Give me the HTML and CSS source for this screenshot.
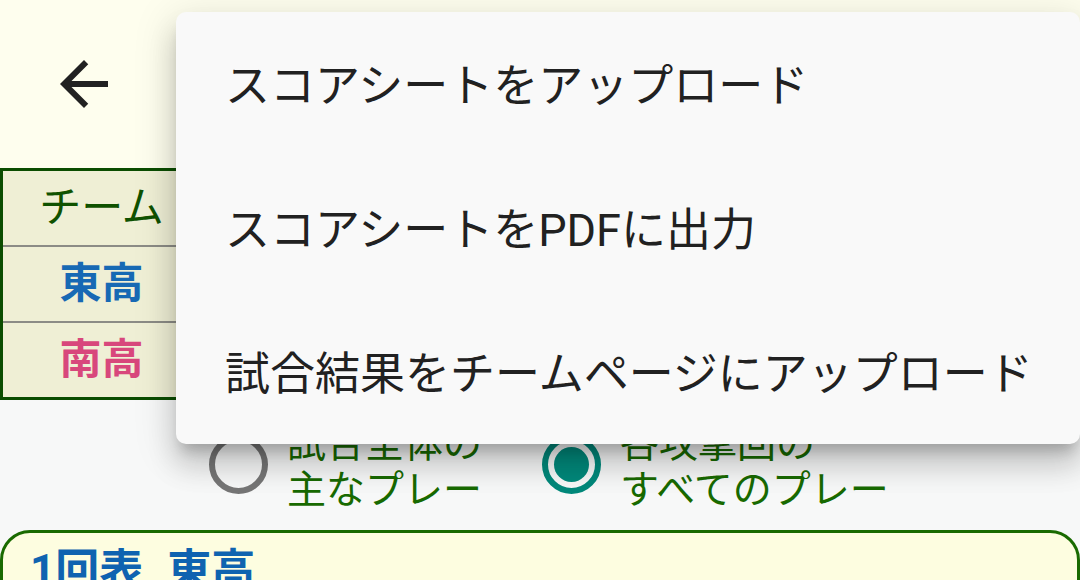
FILE: index.html
```html
<!DOCTYPE html>
<html lang="ja">
<head>
<meta charset="utf-8">
<link rel="stylesheet" href="styles.css">
</head>
<body>
<div class="page">
  <header class="appbar">
    <svg class="back" viewBox="0 0 24 24" width="72" height="72"><path d="M20 11H7.83l5.59-5.59L12 4l-8 8 8 8 1.41-1.41L7.83 13H20v-2z" fill="#212121"/></svg>
  </header>
  <div class="table">
    <div class="row head">チーム</div>
    <div class="divider"></div>
    <div class="row east">東高</div>
    <div class="divider"></div>
    <div class="row south">南高</div>
  </div>
  <div class="options">
    <div class="opt">
      <span class="radio"></span>
      <span class="label">試合全体の<br>主なプレー</span>
    </div>
    <div class="opt">
      <span class="radio on"></span>
      <span class="label">各攻撃回の<br>すべてのプレー</span>
    </div>
  </div>
  <div class="card">
    <div class="card-title">1回表<span class="team">東高</span></div>
  </div>
  <div class="menu">
    <div class="item">スコアシートをアップロード</div>
    <div class="item">スコアシートをPDFに出力</div>
    <div class="item">試合結果をチームページにアップロード</div>
  </div>
</div>
</body>
</html>
```
FILE: styles.css
```css
html, body {
  margin: 0;
  padding: 0;
}
body {
  width: 1080px;
  height: 580px;
  overflow: hidden;
  background: #f7f8f8;
  font-family: Roboto, "Noto Sans CJK JP", sans-serif;
}
.page {
  position: relative;
  width: 1080px;
  height: 580px;
  overflow: hidden;
}
.appbar {
  height: 168px;
  background: #fefeee;
  display: flex;
  align-items: center;
  padding-left: 48px;
}
.back {
  display: block;
}
.table {
  width: 260px;
  border: 3px solid #0b4d00;
  border-right: none;
  background: #efefd5;
  box-sizing: border-box;
}
.row {
  height: 74px;
  display: flex;
  align-items: center;
  justify-content: center;
  width: 197px;
  font-size: 42px;
  line-height: 1;
}
.divider {
  height: 2px;
  background: #8c8c86;
}
.head {
  color: #0f5200;
}
.east {
  color: #1769b4;
  font-weight: 700;
}
.south {
  color: #d8477c;
  font-weight: 700;
}
.options {
  height: 129px;
  display: flex;
  align-items: center;
  padding-left: 209px;
  padding-top: 4px;
  box-sizing: border-box;
  background: #f7f8f8;
}
.opt {
  display: flex;
  align-items: center;
  margin-right: 60px;
}
.radio {
  width: 59px;
  height: 59px;
  box-sizing: border-box;
  border: 6px solid #767676;
  border-radius: 50%;
  margin-right: 19px;
  margin-top: -4px;
  position: relative;
}
.radio.on {
  border-color: #00897b;
}
.radio.on::after {
  content: "";
  position: absolute;
  left: 6px;
  top: 6px;
  width: 35px;
  height: 35px;
  border-radius: 50%;
  background: #00897b;
}
.label {
  font-size: 39px;
  line-height: 46px;
  color: #186a00;
}
.card {
  margin-top: 1px;
  height: 120px;
  background: #fdfde0;
  border: 3px solid #196a00;
  border-radius: 30px;
  padding: 12px 27px 0;
}
.card-title {
  font-size: 44px;
  line-height: 1.2;
  font-weight: 700;
  color: #0f63b0;
}
.team {
  margin-left: 24px;
}
.menu {
  position: absolute;
  left: 176px;
  top: 12px;
  width: 904px;
  height: 432px;
  background: #f9f9f9;
  border-radius: 10px;
  box-shadow: 0 22px 28px 2px rgba(0,0,0,0.14), 0 8px 40px 6px rgba(0,0,0,0.10), 0 12px 14px -6px rgba(0,0,0,0.2);
}
.item {
  height: 144px;
  box-sizing: border-box;
  padding-bottom: 3px;
  display: flex;
  align-items: center;
  padding-left: 49px;
  font-size: 45px;
  color: #212121;
}
```
